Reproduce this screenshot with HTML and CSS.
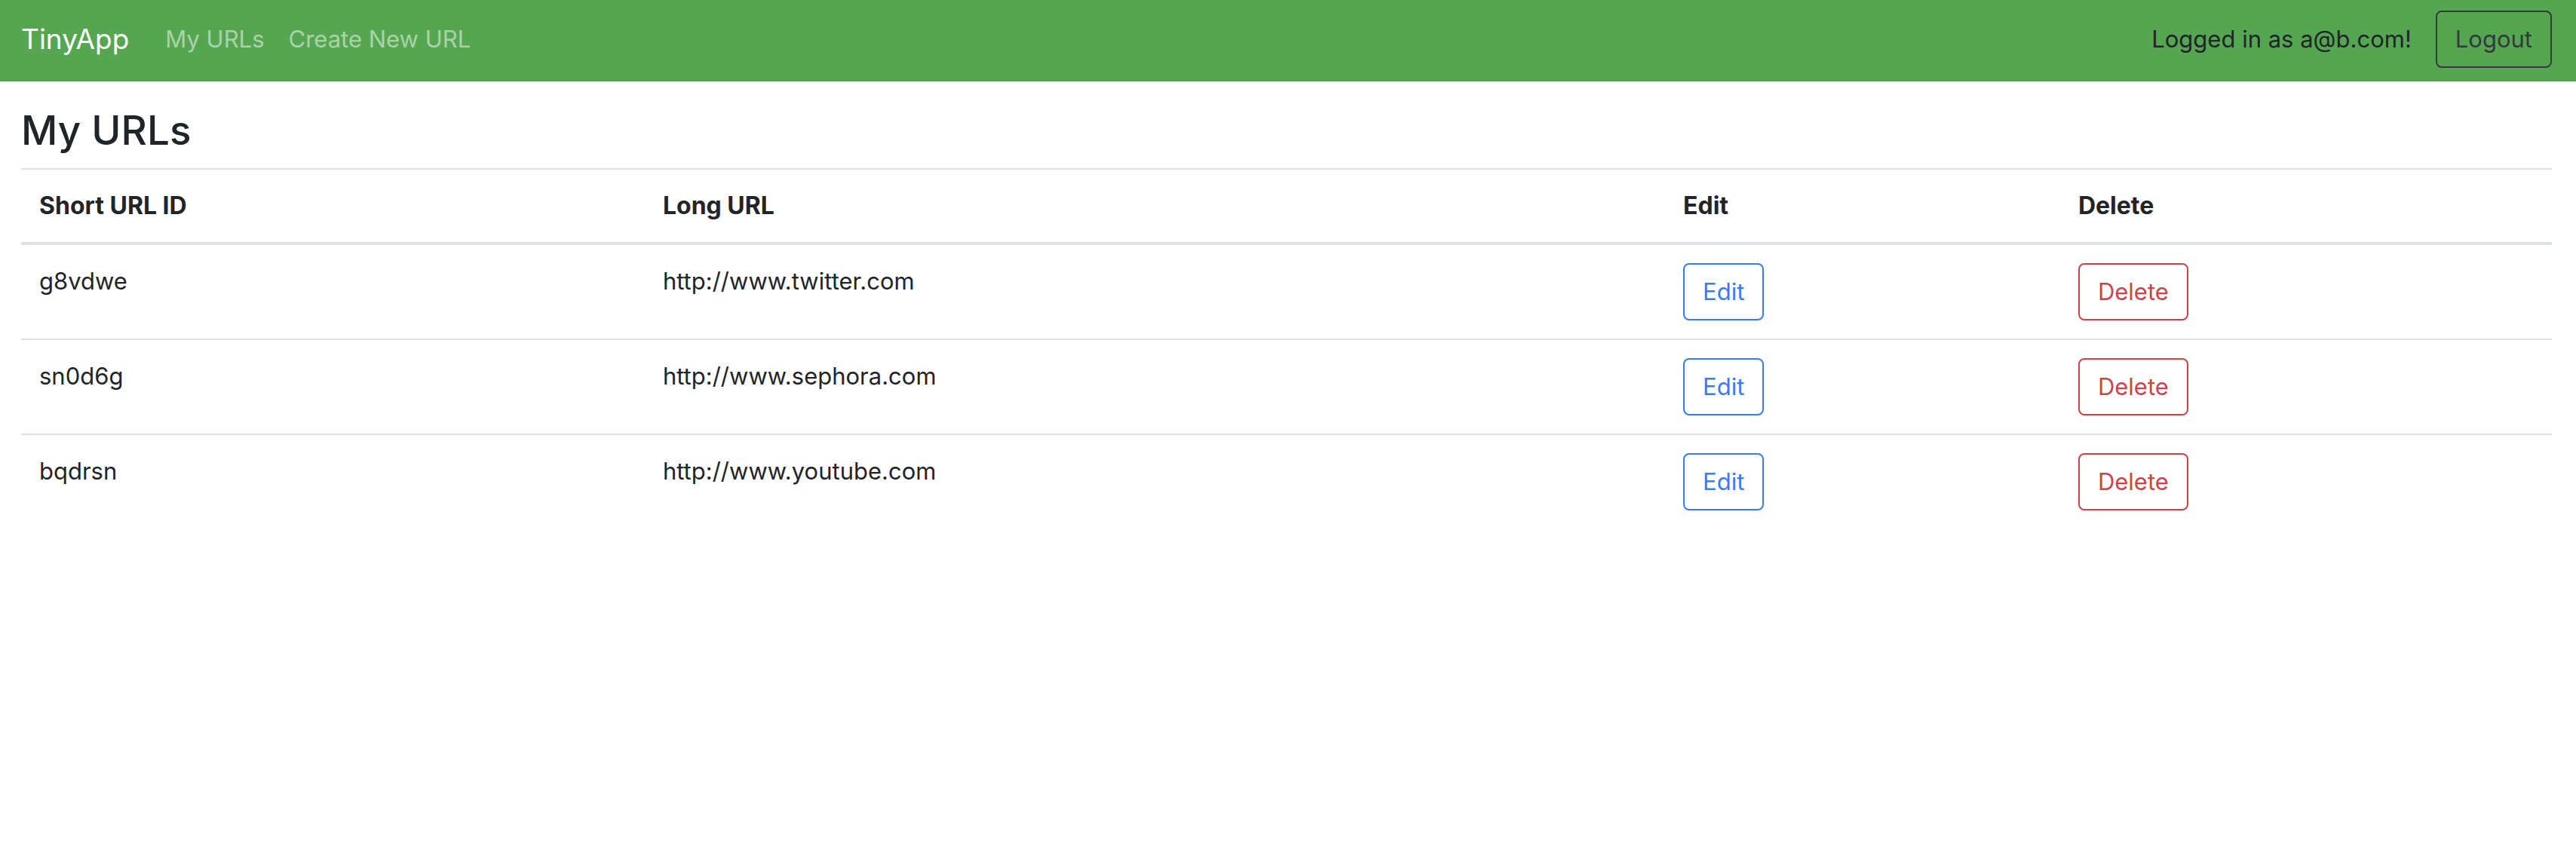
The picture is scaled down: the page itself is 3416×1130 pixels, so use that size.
FILE: index.html
```html
<!DOCTYPE html>
<html lang="en">
<head>
  <meta charset="utf-8">
  <meta name="viewport" content="width=device-width, initial-scale=1">
  <title>TinyApp</title>
  <link rel="stylesheet" href="styles.css">
</head>
<body>
  <header class="navbar">
    <a class="brand" href="#">TinyApp</a>
    <nav class="nav-links">
      <a class="nav-link" href="#">My URLs</a>
      <a class="nav-link" href="#">Create New URL</a>
    </nav>
    <form class="session">
      <span>Logged in as a@b.com!</span>
      <button class="btn btn-dark" type="button">Logout</button>
    </form>
  </header>
  <main class="content">
    <h1 class="title">My URLs</h1>
    <table class="url-table">
      <colgroup>
        <col class="col-id">
        <col class="col-url">
        <col class="col-edit">
        <col class="col-delete">
      </colgroup>
      <thead>
        <tr>
          <th scope="col">Short URL ID</th>
          <th scope="col">Long URL</th>
          <th scope="col">Edit</th>
          <th scope="col">Delete</th>
        </tr>
      </thead>
      <tbody>
        <tr>
          <td>g8vdwe</td>
          <td>http://www.twitter.com</td>
          <td><button class="btn btn-edit" type="button">Edit</button></td>
          <td><button class="btn btn-delete" type="button">Delete</button></td>
        </tr>
        <tr>
          <td>sn0d6g</td>
          <td>http://www.sephora.com</td>
          <td><button class="btn btn-edit" type="button">Edit</button></td>
          <td><button class="btn btn-delete" type="button">Delete</button></td>
        </tr>
        <tr>
          <td>bqdrsn</td>
          <td>http://www.youtube.com</td>
          <td><button class="btn btn-edit" type="button">Edit</button></td>
          <td><button class="btn btn-delete" type="button">Delete</button></td>
        </tr>
      </tbody>
    </table>
  </main>
</body>
</html>
```
FILE: styles.css
```css
*,
*::before,
*::after {
  box-sizing: border-box;
}

body {
  margin: 0;
  background: #fff;
  color: #212529;
  font-family: Inter, "Liberation Sans", sans-serif;
  font-size: 31px;
  line-height: 48px;
}

.navbar {
  display: flex;
  align-items: center;
  padding: 14px 32px 18px 28px;
  background: #55a651;
}

.brand {
  margin-right: 48px;
  color: #fff;
  font-size: 37px;
  line-height: 60px;
  text-decoration: none;
}

.nav-links {
  display: flex;
  gap: 32px;
}

.nav-link {
  color: rgba(255, 255, 255, 0.5);
  text-decoration: none;
}

.session {
  display: flex;
  align-items: center;
  gap: 32px;
  margin-left: auto;
}

.btn {
  display: block;
  padding: 12px 24px;
  border: 2px solid currentColor;
  border-radius: 8px;
  background: transparent;
  font: inherit;
}

.btn-dark {
  color: #343a40;
}

.btn-edit {
  color: #357cf6;
}

.btn-delete {
  color: #cb444a;
}

.content {
  padding: 32px 32px 32px 28px;
}

.title {
  margin: 0 0 16px;
  font-size: 53px;
  font-weight: 500;
  line-height: 67px;
}

.url-table {
  width: 100%;
  border-spacing: 0;
  table-layout: fixed;
}

.col-id {
  width: 24.64%;
}

.col-url {
  width: 40.32%;
}

.col-edit {
  width: 15.61%;
}

.col-delete {
  width: 19.43%;
}

.url-table th,
.url-table td {
  padding: 24px;
  border-top: 2px solid #dee2e6;
  text-align: left;
  vertical-align: top;
}

.url-table th {
  border-bottom: 4px solid #dee2e6;
  font-size: 32px;
  font-weight: 700;
}

.url-table tbody tr:first-child td {
  border-top: 0;
}
```
